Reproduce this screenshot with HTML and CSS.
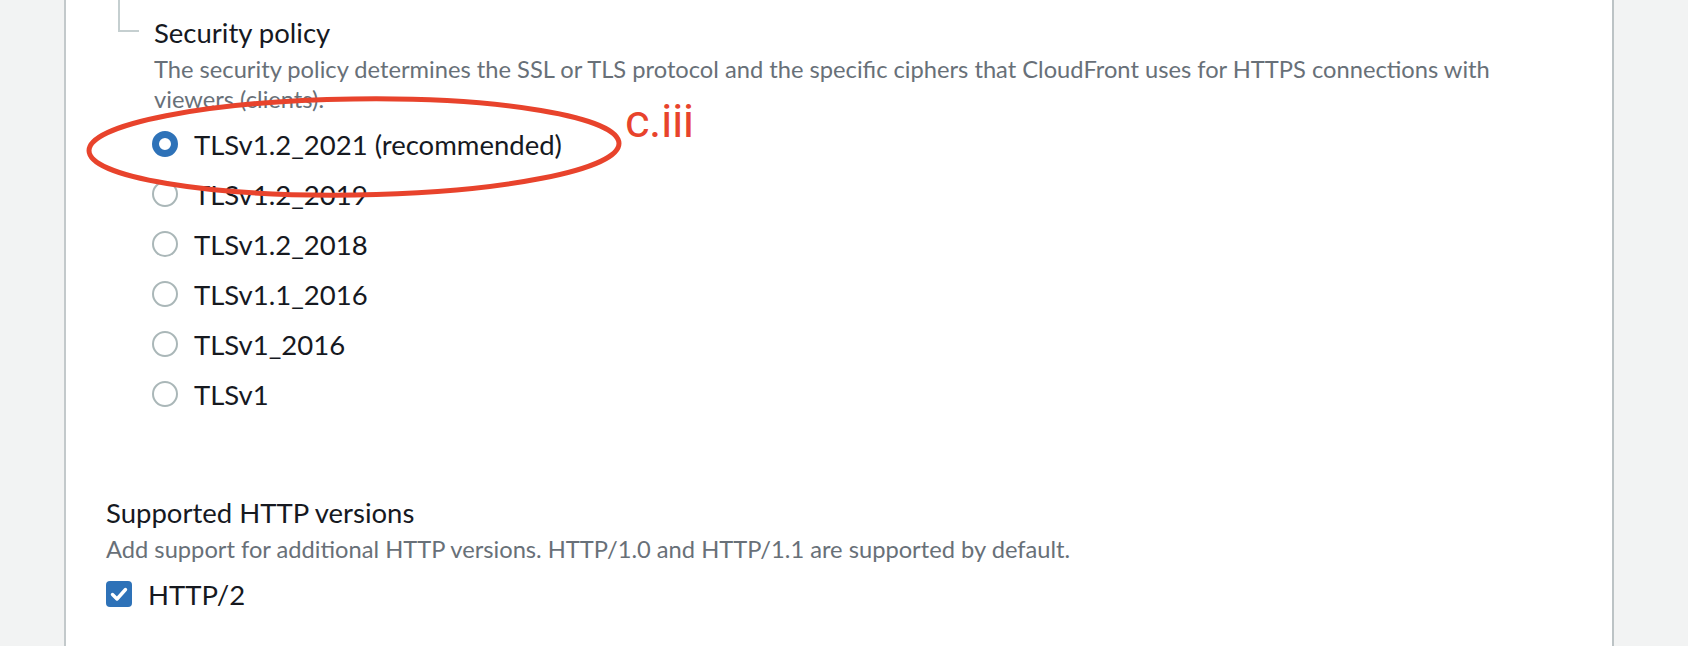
FILE: index.html
```html
<!DOCTYPE html>
<html lang="en">
<head>
<meta charset="utf-8">
<title>Security policy</title>
<link rel="stylesheet" href="styles.css">
</head>
<body>
<div class="page">
  <div class="card">
    <div class="subsection">
      <div class="field-label">Security policy</div>
      <div class="field-desc">The security policy determines the SSL or TLS protocol and the specific ciphers that CloudFront uses for HTTPS connections with viewers (clients).</div>
      <div class="radio-group">
        <label class="option"><span class="radio checked"></span><span class="option-text">TLSv1.2_2021 (recommended)</span></label>
        <label class="option"><span class="radio"></span><span class="option-text">TLSv1.2_2019</span></label>
        <label class="option"><span class="radio"></span><span class="option-text">TLSv1.2_2018</span></label>
        <label class="option"><span class="radio"></span><span class="option-text">TLSv1.1_2016</span></label>
        <label class="option"><span class="radio"></span><span class="option-text">TLSv1_2016</span></label>
        <label class="option"><span class="radio"></span><span class="option-text">TLSv1</span></label>
      </div>
    </div>
    <div class="field">
      <div class="field-label">Supported HTTP versions</div>
      <div class="field-desc">Add support for additional HTTP versions. HTTP/1.0 and HTTP/1.1 are supported by default.</div>
      <label class="option check-option">
        <span class="checkbox"><svg viewBox="0 0 26 26" width="26" height="26"><path d="M6.5 13.5 L11 18 L19.5 8.5" fill="none" stroke="#fff" stroke-width="3.4" stroke-linecap="round" stroke-linejoin="round"/></svg></span>
        <span class="option-text">HTTP/2</span>
      </label>
    </div>
  </div>
  <div class="annotation">
    <svg class="ring" viewBox="0 0 600 130" width="600" height="130">
      <ellipse cx="290" cy="55" rx="265" ry="48" transform="rotate(-0.8 290 55)" fill="none" stroke="#e8432c" stroke-width="5"/>
    </svg>
    <span class="tag">c.iii</span>
  </div>
</div>
</body>
</html>
```
FILE: styles.css
```css
html, body {
  margin: 0;
  padding: 0;
}
body {
  background: #f2f3f3;
  font-family: Lato, "Open Sans", sans-serif;
  color: #16191f;
  overflow: hidden;
}
.page {
  position: relative;
  padding-left: 64px;
  width: 1550px;
}
.card {
  background: #fff;
  border-left: 2px solid #c3c9cb;
  border-right: 2px solid #bcc3c5;
  min-height: 646px;
  padding: 0 40px;
  box-sizing: border-box;
  width: 1550px;
}
.subsection {
  position: relative;
  padding-left: 48px;
  padding-top: 14px;
}
.subsection::before {
  content: "";
  position: absolute;
  left: 12px;
  top: 0;
  width: 19px;
  height: 30px;
  border-left: 2px solid #c5cfd0;
  border-bottom: 2px solid #c5cfd0;
}
.field-label {
  font-size: 27.5px;
  line-height: 38px;
  color: #16191f;
}
.field-desc {
  font-size: 23.7px;
  line-height: 30px;
  color: #687078;
  margin-top: 2px;
}
.radio-group {
  margin-top: 5px;
  display: flex;
  flex-direction: column;
}
.option {
  display: flex;
  align-items: center;
  height: 50px;
  gap: 16px;
}
.option-text {
  font-size: 27.5px;
  color: #16191f;
}
.radio {
  width: 26px;
  height: 26px;
  border-radius: 50%;
  box-sizing: border-box;
  border: 2.5px solid #aab7b8;
  background: #fff;
  flex: none;
  margin-left: -2px;
}
.radio.checked {
  border: 7px solid #2e72b8;
}
.field {
  margin-top: 75px;
}
.check-option {
  margin-top: 5px;
}
.checkbox {
  width: 26px;
  height: 26px;
  border-radius: 4px;
  background: #2e72b8;
  flex: none;
  display: block;
}
.checkbox svg {
  display: block;
}
.annotation {
  position: absolute;
  left: 64px;
  top: 92px;
  width: 660px;
  height: 120px;
}
.ring {
  position: absolute;
  left: 0;
  top: 0;
  overflow: visible;
}
.tag {
  position: absolute;
  left: 561px;
  top: 10px;
  font-family: Roboto, "Liberation Sans", sans-serif;
  font-size: 47px;
  line-height: 37px;
  letter-spacing: -0.5px;
  color: #e8432c;
}
```
